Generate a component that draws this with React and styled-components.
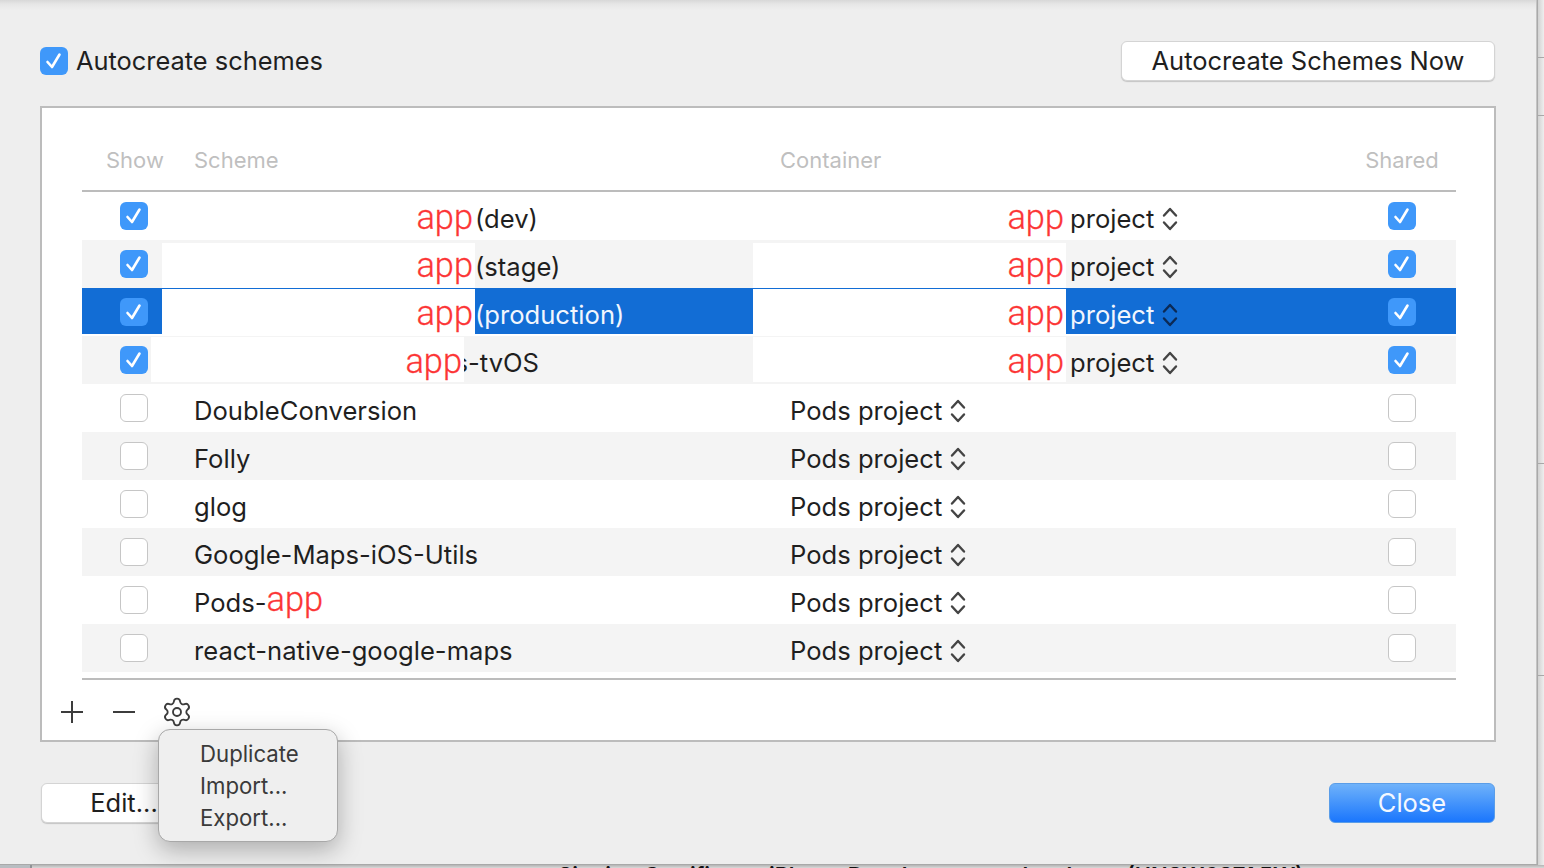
import React from "react"
import styled, { createGlobalStyle } from "styled-components"
import { Settings } from "lucide-react"

const GlobalStyle = createGlobalStyle`
    html, body {
        margin: 0;
        padding: 0;
        height: 100%;
        overflow: hidden;
        background: #ffffff;
    }
    body {
        font-family: Inter, "Liberation Sans", sans-serif;
        color: #1f1f1f;
    }
`
const Screen = styled.div`
    display: flex;
    flex-direction: column;
    width: 1544px;
    height: 868px;
    overflow: hidden;
`
const Upper = styled.div`
    display: flex;
    height: 865px;
    flex: none;
`
const Dialog = styled.div`
    position: relative;
    box-sizing: border-box;
    width: 1538px;
    flex: none;
    padding: 41px 41px 0 40px;
    background: linear-gradient(#d8d8d8 0, #e6e6e6 4px, #eeeeee 10px);
    border-right: 1px solid #a9a9a9;
    border-bottom: 1px solid #a9a9a9;
    box-shadow: inset -1px 0 0 #c4c4c4;
`
const Strip = styled.div`
    flex: 1;
    display: flex;
    flex-direction: column;
    padding-top: 57px;
    background: linear-gradient(90deg, #d2d2d2, #eeeeee);
`
const Tick = styled.div`
    height: 1px;
    flex: none;
    background: #a8a8a8;
    margin-bottom: ${(p) => p.$gap || 0}px;
`
const TopBar = styled.div`
    display: flex;
    align-items: center;
    justify-content: space-between;
    height: 40px;
    margin-bottom: 25px;
    padding-right: 1px;
`
const AutoLabel = styled.label`
    display: flex;
    align-items: center;
    gap: 8px;
    font-size: 25.4px;
    line-height: 40px;
`
const Button = styled.button`
    box-sizing: border-box;
    height: 40px;
    width: ${(p) => p.$width}px;
    padding: 0 0 2px;
    font-family: inherit;
    font-size: 25.5px;
    color: #1f1f1f;
    background: #ffffff;
    border: 1px solid #d4d4d4;
    border-radius: 6px;
    box-shadow: 0 1px 1px #c4c4c4;
`
const PrimaryButton = styled(Button)`
    color: #f4f8ff;
    background: linear-gradient(#6fb2fa, #1a76fd);
    border-color: #5a9de8;
    box-shadow: none;
`
const Panel = styled.div`
    box-sizing: border-box;
    height: 636px;
    padding: 0 38px 0 40px;
    background: #ffffff;
    border: 2px solid #bcbcbc;
`
const HeadRow = styled.div`
    display: grid;
    grid-template-columns: 80px 591px 1fr 108px;
    align-items: center;
    height: 84px;
    padding-top: 22px;
    box-sizing: border-box;
    border-bottom: 2px solid #bcbcbc;
`
const HeadCell = styled.div`
    font-size: 22px;
    color: #bfbfbf;
    white-space: nowrap;
    padding-left: ${(p) => p.$pad || 0}px;
    text-align: ${(p) => p.$align || "left"};
`
const Row = styled.div`
    display: grid;
    grid-template-columns: 80px 591px 1fr 108px;
    height: 48px;
    background: ${(p) => (p.$alt ? "#f4f4f4" : "#ffffff")};
    color: #1f1f1f;
`
const SelectedRow = styled(Row)`
    color: #f2f6fd;
    background: linear-gradient(#126dd5 46px, #ffffff 46px);
`
const CheckCell = styled.div`
    display: flex;
    align-items: center;
    justify-content: ${(p) => (p.$center ? "center" : "flex-start")};
    padding-left: ${(p) => (p.$center ? 0 : 38)}px;
    height: 48px;
`
const TextCell = styled.div`
    display: flex;
    align-items: center;
    min-width: 0;
    padding: 5px 0 0 ${(p) => p.$pad || 0}px;
    font-size: 25.6px;
    white-space: nowrap;
`
const Patch = styled.div`
    box-sizing: border-box;
    display: flex;
    align-items: flex-start;
    justify-content: flex-end;
    align-self: flex-start;
    flex: none;
    width: 313px;
    height: ${(p) => p.$height}px;
    margin-top: ${(p) => p.$top - 5}px;
    margin-left: ${(p) => p.$shift || 0}px;
    margin-right: ${(p) => p.$after || 0}px;
    padding: ${(p) => 5 - p.$top}px 2px 0 0;
    background: #ffffff;
`
const Brand = styled.span`
    font-family: Roboto, "Liberation Sans", sans-serif;
    font-weight: 300;
    font-size: 34.4px;
    line-height: 40px;
    color: #fc3535;
    -webkit-text-stroke: 0.3px #fc3535;
`
const InlineBrand = styled(Brand)`
    position: relative;
    top: -4px;
`
const Sliver = styled.span`
    display: inline-block;
    width: 4px;
    overflow: hidden;
    direction: rtl;
`
const Box = styled.span`
    box-sizing: border-box;
    display: inline-flex;
    align-items: center;
    justify-content: center;
    flex: none;
    width: 28px;
    height: 28px;
    border-radius: 6px;
    background: ${(p) => (p.$on ? "#3f98fa" : "#ffffff")};
    border: ${(p) => (p.$on ? "none" : "1px solid #c6c6c6")};
`
const Stepper = styled.svg`
    flex: none;
    margin-left: 8px;
    width: 16px;
    height: 26px;
    color: ${(p) => (p.$dark ? "#0c2a55" : "#444444")};
`
const Rule = styled.div`
    height: 2px;
    margin-top: 6px;
    background: #bcbcbc;
`
const Tools = styled.div`
    display: flex;
    align-items: center;
    gap: 28px;
    height: 28px;
    margin: 18px 0 0 -22px;
`
const Gear = styled(Settings)`
    flex: none;
    margin: -2px -2px -2px -3px;
    color: #3c3c3c;
`
const Footer = styled.div`
    display: flex;
    justify-content: space-between;
    margin-top: 41px;
    padding: 0 1px;
`
const Menu = styled.div`
    position: absolute;
    left: 158px;
    top: 729px;
    box-sizing: border-box;
    width: 180px;
    height: 113px;
    padding: 8px 0 0 41px;
    background: #efefef;
    border-radius: 12px;
    border: 1px solid #a8a8a8;
    box-shadow: 0 8px 24px rgba(0, 0, 0, 0.28);
`
const MenuItem = styled.div`
    font-size: 22.2px;
    line-height: 32px;
    color: #3a3a3a;
`
const Under = styled.div`
    display: flex;
    flex: 1;
    background: linear-gradient(#b4b4b4, #d8d8d8);
    overflow: hidden;
`
const UnderSide = styled.div`
    flex: none;
    width: 30px;
    background: #b8bdc1;
    border-right: 2px solid #8f9396;
`
const Cutoff = styled.div`
    padding: 1px 0 0 526px;
    font-weight: 600;
    font-size: 22px;
    line-height: 18px;
    color: #111111;
    white-space: nowrap;
`

const Check = ({ on = true }) => (
    <Box $on={on}>
        {on && (
            <svg width="20" height="20" viewBox="0 0 20 20" fill="none">
                <path d="M3.5 11 L8 16 L15.5 3.5" stroke="#fff" strokeWidth="2.6" strokeLinecap="round" strokeLinejoin="round" />
            </svg>
        )}
    </Box>
)

const Chevrons = ({ dark }) => (
    <Stepper $dark={dark} viewBox="0 0 16 26" fill="none">
        <path d="M2 9.5 L8 3 L14 9.5 M2 16.5 L8 23 L14 16.5" stroke="currentColor" strokeWidth="2.4" strokeLinecap="round" strokeLinejoin="round" />
    </Stepper>
)

const Plus = () => (
    <svg width="24" height="24" viewBox="0 0 24 24" stroke="#3c3c3c" strokeWidth="2">
        <path d="M1 12 H23 M12 1 V23" />
    </svg>
)

const Minus = () => (
    <svg width="24" height="24" viewBox="0 0 24 24" stroke="#3c3c3c" strokeWidth="2">
        <path d="M1 12 H23" />
    </svg>
)

const brandRows = [
    { suffix: "(dev)", top: 0, height: 48 },
    { suffix: "(stage)", alt: true, top: 3, height: 45 },
    { suffix: "(production)", selected: true, top: 1, height: 46 },
    { suffix: "-tvOS", alt: true, top: 1, height: 45, shift: -11, clipped: true },
]

const podRows = ["DoubleConversion", "Folly", "glog", "Google-Maps-iOS-Utils", "Pods-app", "react-native-google-maps"]

const BrandRow = ({ suffix, alt, selected, top, height, shift, clipped }) => {
    const Wrap = selected ? SelectedRow : Row
    return (
        <Wrap $alt={alt}>
            <CheckCell><Check /></CheckCell>
            <TextCell>
                <Patch $top={top} $height={height} $shift={shift}><Brand>app</Brand></Patch>
                {clipped && <Sliver>s</Sliver>}
                {suffix}
            </TextCell>
            <TextCell>
                <Patch $top={top} $height={height} $after={4}><Brand>app</Brand></Patch>
                project
                <Chevrons dark={selected} />
            </TextCell>
            <CheckCell $center><Check /></CheckCell>
        </Wrap>
    )
}

const PodRow = ({ name, alt }) => (
    <Row $alt={alt}>
        <CheckCell><Check on={false} /></CheckCell>
        <TextCell $pad={32}>
            {name === "Pods-app" ? <>Pods-<InlineBrand>app</InlineBrand></> : name}
        </TextCell>
        <TextCell $pad={37}>
            Pods project
            <Chevrons />
        </TextCell>
        <CheckCell $center><Check on={false} /></CheckCell>
    </Row>
)

export default function App() {
    return (
        <Screen>
            <GlobalStyle />
            <Upper>
                <Dialog>
                    <TopBar>
                        <AutoLabel><Check />Autocreate schemes</AutoLabel>
                        <Button $width={374}>Autocreate Schemes Now</Button>
                    </TopBar>
                    <Panel>
                        <HeadRow>
                            <HeadCell $pad={24}>Show</HeadCell>
                            <HeadCell $pad={32}>Scheme</HeadCell>
                            <HeadCell $pad={27}>Container</HeadCell>
                            <HeadCell $align="center">Shared</HeadCell>
                        </HeadRow>
                        {brandRows.map((row) => <BrandRow key={row.suffix} {...row} />)}
                        {podRows.map((name, i) => <PodRow key={name} name={name} alt={i % 2 === 1} />)}
                        <Rule />
                        <Tools>
                            <Plus />
                            <Minus />
                            <Gear size={32} strokeWidth={1.4} />
                        </Tools>
                    </Panel>
                    <Footer>
                        <Button $width={166}>Edit...</Button>
                        <PrimaryButton $width={166}>Close</PrimaryButton>
                    </Footer>
                    <Menu>
                        <MenuItem>Duplicate</MenuItem>
                        <MenuItem>Import...</MenuItem>
                        <MenuItem>Export...</MenuItem>
                    </Menu>
                </Dialog>
                <Strip>
                    <Tick $gap={57} />
                    <Tick $gap={347} />
                    <Tick $gap={211} />
                    <Tick />
                </Strip>
            </Upper>
            <Under>
                <UnderSide />
                <Cutoff>Signing Certificate: iPhone Developer: app developer (UNSW6S7A5W)</Cutoff>
            </Under>
        </Screen>
    )
}
